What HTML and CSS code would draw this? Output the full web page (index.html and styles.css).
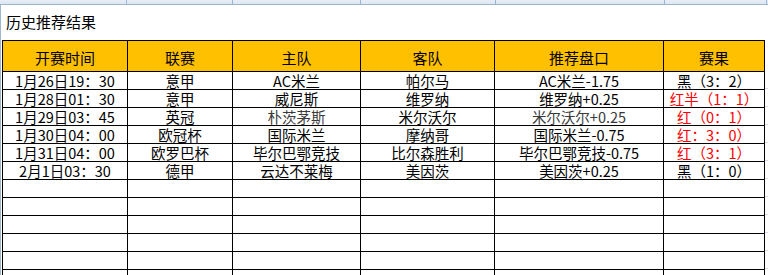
FILE: index.html
```html
<!DOCTYPE html>
<html lang="zh-CN">
<head>
<meta charset="utf-8">
<title>历史推荐结果</title>
<link rel="stylesheet" href="styles.css">
</head>
<body>
<div class="colhdr">
  <span class="ch c1"></span><span class="ch c2"></span><span class="ch c3"></span><span class="ch c4"></span><span class="ch c5"></span><span class="ch c6"></span><span class="ch rest"></span>
</div>
<div class="sheet">
  <div class="rowhdr"></div>
  <div class="content">
    <div class="title">历史推荐结果</div>
    <div class="tablewrap">
      <div class="grid">
        <div class="cell head">开赛时间</div>
        <div class="cell head">联赛</div>
        <div class="cell head">主队</div>
        <div class="cell head">客队</div>
        <div class="cell head">推荐盘口</div>
        <div class="cell head">赛果</div>

        <div class="cell">1月26日19：30</div>
        <div class="cell">意甲</div>
        <div class="cell">AC米兰</div>
        <div class="cell">帕尔马</div>
        <div class="cell">AC米兰-1.75</div>
        <div class="cell">黑（3：2）</div>

        <div class="cell">1月28日01：30</div>
        <div class="cell">意甲</div>
        <div class="cell">威尼斯</div>
        <div class="cell">维罗纳</div>
        <div class="cell">维罗纳+0.25</div>
        <div class="cell red">红半（1：1）</div>

        <div class="cell">1月29日03：45</div>
        <div class="cell">英冠</div>
        <div class="cell grey">朴茨茅斯</div>
        <div class="cell">米尔沃尔</div>
        <div class="cell grey">米尔沃尔+0.25</div>
        <div class="cell red">红（0：1）</div>

        <div class="cell">1月30日04：00</div>
        <div class="cell">欧冠杯</div>
        <div class="cell">国际米兰</div>
        <div class="cell">摩纳哥</div>
        <div class="cell">国际米兰-0.75</div>
        <div class="cell red">红：3：0）</div>

        <div class="cell">1月31日04：00</div>
        <div class="cell">欧罗巴杯</div>
        <div class="cell">毕尔巴鄂竞技</div>
        <div class="cell">比尔森胜利</div>
        <div class="cell">毕尔巴鄂竞技-0.75</div>
        <div class="cell red">红（3：1）</div>

        <div class="cell">2月1日03：30</div>
        <div class="cell">德甲</div>
        <div class="cell">云达不莱梅</div>
        <div class="cell">美因茨</div>
        <div class="cell">美因茨+0.25</div>
        <div class="cell">黑（1：0）</div>

        <div class="cell"></div><div class="cell"></div><div class="cell"></div><div class="cell"></div><div class="cell"></div><div class="cell"></div>
        <div class="cell"></div><div class="cell"></div><div class="cell"></div><div class="cell"></div><div class="cell"></div><div class="cell"></div>
        <div class="cell"></div><div class="cell"></div><div class="cell"></div><div class="cell"></div><div class="cell"></div><div class="cell"></div>
        <div class="cell"></div><div class="cell"></div><div class="cell"></div><div class="cell"></div><div class="cell"></div><div class="cell"></div>
        <div class="cell"></div><div class="cell"></div><div class="cell"></div><div class="cell"></div><div class="cell"></div><div class="cell"></div>
        <div class="cell"></div><div class="cell"></div><div class="cell"></div><div class="cell"></div><div class="cell"></div><div class="cell"></div>
      </div>
      <div class="filler"></div>
    </div>
  </div>
</div>
</body>
</html>
```
FILE: styles.css
```css
html, body {
  margin: 0;
  padding: 0;
  background: #ffffff;
  overflow: hidden;
  height: 275px;
}
body {
  font-family: "Noto Sans CJK SC", "Noto Sans", sans-serif;
  font-size: 15px;
  color: #000;
}
.colhdr {
  display: flex;
  height: 4px;
  background: linear-gradient(#e9eff8, #dbe5f1);
  border-bottom: 1px solid #9eb6ce;
}
.ch {
  border-right: 1px solid #9eb6ce;
  flex: none;
}
.c1 { width: 126px; }
.c2 { width: 105px; }
.c3 { width: 127px; }
.c4 { width: 134px; }
.c5 { width: 168px; }
.c6 { width: 101px; }
.rest { flex: 1; border-right: none; }

.sheet {
  display: flex;
}
.rowhdr {
  width: 1px;
  flex: none;
  background: #9eb6ce;
  height: 270px;
}
.content {
  flex: 1;
  padding-left: 1px;
}
.title {
  height: 35px;
  line-height: 34px;
  padding-left: 4px;
  font-size: 15px;
}
.tablewrap {
  display: flex;
}
.grid {
  display: grid;
  grid-template-columns: 124px 104px 127px 133px 168px 100px;
  grid-template-rows: 30px repeat(12, 17px);
  gap: 1px;
  padding: 1px;
  background: #000;
  flex: none;
}
.cell {
  background: #fff;
  display: flex;
  align-items: center;
  justify-content: center;
  white-space: nowrap;
  font-size: 14.5px;
  line-height: 17px;
}
.cell.head {
  background: #ffc000;
  font-size: 15px;
  padding-top: 2px;
}
.red { color: #ff0000; }
.grey { color: #3a3a3a; }
.filler {
  flex: 1;
  background-image: repeating-linear-gradient(to bottom, transparent 0, transparent 17px, #d4dbe8 17px, #d4dbe8 18px);
  background-repeat: repeat-y;
  background-size: 100% 18px;
  margin-top: 31px;
}
```
